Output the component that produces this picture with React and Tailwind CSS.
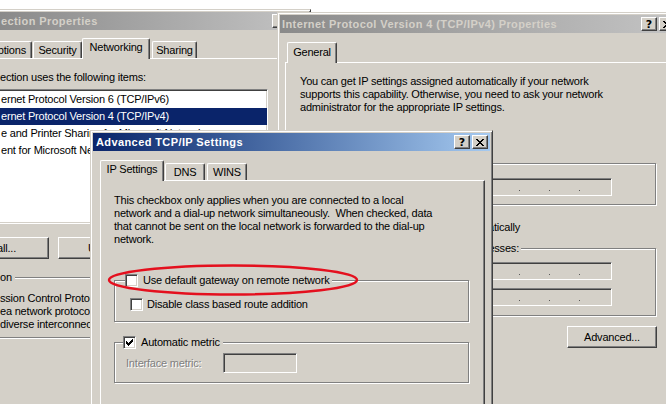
import React from "react";

const raised =
  "border border-t-white border-l-white border-r-[#404040] border-b-[#404040] shadow-[inset_-1px_-1px_0_#808080]";
const sunken =
  "border border-t-[#808080] border-l-[#808080] border-r-white border-b-white shadow-[inset_1px_1px_0_#404040,inset_-1px_-1px_0_#d4d0c8]";
const etched = "border border-[#808080] shadow-[inset_1px_1px_0_#fff,1px_1px_0_#fff]";
const win =
  "border border-t-[#d4d0c8] border-l-[#d4d0c8] border-r-[#404040] border-b-[#404040] shadow-[inset_1px_1px_0_#fff,inset_-1px_-1px_0_#808080] p-[2px] bg-[#d4d0c8]";

function XGlyph() {
  return (
    <svg width="8" height="7" viewBox="0 0 8 7" shapeRendering="crispEdges">
      <path
        fill="#000"
        d="M0 0h2v1h-2z M6 0h2v1h-2z M1 1h2v1h-2z M5 1h2v1h-2z M2 2h4v1h-4z M3 3h2v1h-2z M2 4h4v1h-4z M1 5h2v1h-2z M5 5h2v1h-2z M0 6h2v1h-2z M6 6h2v1h-2z"
      />
    </svg>
  );
}

function TBtn({ kind }) {
  return (
    <div className={`w-[16px] h-[14px] bg-[#d4d0c8] ${raised} flex items-center justify-center`}>
      {kind === "x" ? (
        <XGlyph />
      ) : (
        <span className="font-bold text-[11px] leading-none tracking-normal text-black font-['DejaVu_Sans',sans-serif]">?</span>
      )}
    </div>
  );
}

function TitleBar({ title, active, textClass }) {
  return (
    <div
      className={`h-[18px] shrink-0 flex items-center pr-[2px] ${
        active ? "bg-linear-to-r from-[#0a246a] to-[#a6caf0]" : "bg-linear-to-r from-[#8a8a8a] to-[#c4c4c4]"
      }`}
    >
      <span
        className={`font-bold tracking-[0.4px] whitespace-nowrap ${active ? "text-white" : "text-[#d4d0c8]"} ${textClass}`}
      >
        {title}
      </span>
      <div className="ml-auto flex gap-[2px]">
        <TBtn kind="q" />
        <TBtn kind="x" />
      </div>
    </div>
  );
}

function Tab({ children, selected, className = "" }) {
  return (
    <div
      className={`${
        selected ? "h-[21px] -mb-[1px] relative z-10" : "h-[17px]"
      } bg-[#d4d0c8] border-t border-l border-r border-t-white border-l-white border-r-[#404040] shadow-[inset_-1px_0_0_#808080] rounded-t-[2px] flex items-center whitespace-nowrap ${className}`}
    >
      {children}
    </div>
  );
}

function Check({ checked }) {
  return (
    <div className={`w-[13px] h-[13px] shrink-0 bg-white ${sunken} flex items-center justify-center`}>
      {checked && (
        <svg width="7" height="7" viewBox="0 0 7 7" shapeRendering="crispEdges">
          <path
            fill="#000"
            d="M6 0h1v1h-1z M5 1h2v1h-2z M0 2h1v1h-1z M4 2h3v1h-3z M0 3h2v1h-2z M3 3h3v1h-3z M0 4h5v1h-5z M1 5h3v1h-3z M2 6h1v1h-1z"
          />
        </svg>
      )}
    </div>
  );
}

function IPField({ className = "" }) {
  return (
    <div className={`w-[124px] h-[18px] ml-auto mr-[43px] bg-[#d4d0c8] ${sunken} flex items-start pt-[11px] pl-[30px] ${className}`}>
      <span className="w-[1px] h-[1px] bg-[#5a5a5a]" />
      <span className="w-[1px] h-[1px] bg-[#5a5a5a] ml-[29px]" />
      <span className="w-[1px] h-[1px] bg-[#5a5a5a] ml-[29px]" />
    </div>
  );
}

function ConnectionWindow() {
  return (
    <div className={`absolute left-[-3px] top-[9px] w-[314px] h-[420px] ${win} flex flex-col`}>
      <TitleBar title="ection Properties" textClass="pl-[1px]" />
      <div className="mt-[8px] h-[20px] flex items-end relative z-10">
        <Tab className="ml-[-10px] w-[42px] justify-end pr-[5px]">ptions</Tab>
        <Tab className="ml-[1px] w-[49px] justify-center">Security</Tab>
        <Tab selected className="w-[68px] justify-center pb-[3px]">
          Networking
        </Tab>
        <Tab className="ml-[2px] w-[45px] justify-center">Sharing</Tab>
      </div>
      <div className="flex-1 border-t border-t-white flex flex-col">
        <div className="mt-[12px] leading-[13px] whitespace-nowrap">ection uses the following items:</div>
        <div className={`mt-[5px] ml-[-4px] w-[272px] h-[135px] bg-white ${sunken} pt-[1px] flex flex-col`}>
          <div className="h-[17px] flex items-center pl-[4px] whitespace-nowrap">ernet Protocol Version 6 (TCP/IPv6)</div>
          <div className="h-[17px] flex items-center pl-[4px] whitespace-nowrap bg-[#0a246a] text-white">
            ernet Protocol Version 4 (TCP/IPv4)
          </div>
          <div className="h-[17px] flex items-center pl-[4px] whitespace-nowrap">
            e and Printer Sharing for Microsoft Networks
          </div>
          <div className="h-[17px] flex items-center pl-[4px] whitespace-nowrap">ent for Microsoft Networks</div>
        </div>
        <div className="mt-[13px] flex h-[22px]">
          <div className={`ml-[-4px] w-[53px] ${raised} flex items-center justify-end pr-[32px] overflow-hidden whitespace-nowrap`}>
            Install...
          </div>
          <div className={`ml-[9px] w-[90px] ${raised} flex items-center pl-[29px] whitespace-nowrap`}>Uninstall</div>
        </div>
        <div className={`mt-[18px] ml-[-4px] w-[280px] ${etched} pb-[6px] flex flex-col`}>
          <div className="-mt-[7px] ml-[3px] w-fit pr-[3px] h-[13px] leading-[13px] bg-[#d4d0c8]">on</div>
          <div className="mt-[8px] pl-[3px] leading-[13px] whitespace-nowrap">
            <div>ssion Control Protocol/Internet Protocol. The</div>
            <div>ea network protocol that provides communication</div>
            <div>diverse interconnected networks.</div>
          </div>
        </div>
      </div>
    </div>
  );
}

function IPv4Window() {
  return (
    <div className={`absolute left-[277px] top-[12px] w-[403px] h-[410px] ${win} flex flex-col`}>
      <TitleBar title="Internet Protocol Version 4 (TCP/IPv4) Properties" textClass="pl-[2px]" />
      <div className="mt-[9px] h-[20px] flex items-end relative z-10">
        <Tab selected className="ml-[7px] w-[50px] justify-center pb-[2px]">
          General
        </Tab>
      </div>
      <div className="flex-1 ml-[5px] mr-[5px] border-t border-l border-t-white border-l-white flex flex-col pl-[14px]">
        <div className="mt-[12px] leading-[13px] whitespace-pre">
          {"You can get IP settings assigned automatically if your network\nsupports this capability. Otherwise, you need to ask your network\nadministrator for the appropriate IP settings."}
        </div>
        <div className="mt-[14px] h-[13px] leading-[13px] pl-[16px] whitespace-nowrap">Obtain an IP address automatically</div>
        <div className={`mt-[22px] w-[356px] h-[42px] ${etched} flex flex-col`}>
          <div className="-mt-[7px] h-[13px]" />
          <IPField className="mt-[8px]" />
        </div>
        <div className="mt-[16px] w-[220px] h-[13px] leading-[13px] text-right whitespace-nowrap">
          Obtain DNS server address automatically
        </div>
        <div className={`mt-[14px] w-[356px] ${etched} pb-[9px] flex flex-col`}>
          <div className="-mt-[7px] w-[220px] pr-[2px] h-[13px] leading-[13px] text-right whitespace-nowrap bg-[#d4d0c8]">
            Use the following DNS server addresses:
          </div>
          <IPField className="mt-[7px]" />
          <IPField className="mt-[8px]" />
        </div>
        <div className={`mt-[10px] ml-[267px] w-[90px] h-[22px] ${raised} flex items-center justify-center whitespace-nowrap`}>
          Advanced...
        </div>
      </div>
    </div>
  );
}

function AdvancedWindow() {
  return (
    <div className={`absolute left-[90px] top-[130px] w-[403px] h-[290px] ${win} flex flex-col`}>
      <TitleBar active title="Advanced TCP/IP Settings" textClass="pl-[3px]" />
      <div className="mt-[10px] h-[19px] flex items-end relative z-10">
        <Tab selected className="ml-[7px] w-[64px] justify-center pb-[3px]">
          IP Settings
        </Tab>
        <Tab className="ml-[1px] w-[40px] justify-center">DNS</Tab>
        <Tab className="ml-[2px] w-[40px] justify-center">WINS</Tab>
      </div>
      <div className="flex-1 ml-[7px] w-[385px] border-t border-l border-r border-t-white border-l-white border-r-[#404040] shadow-[inset_-1px_0_0_#808080] flex flex-col pl-[13px]">
        <div className="mt-[13px] leading-[13px] whitespace-pre">
          {"This checkbox only applies when you are connected to a local\nnetwork and a dial-up network simultaneously.  When checked, data\nthat cannot be sent on the local network is forwarded to the dial-up\nnetwork."}
        </div>
        <div className={`mt-[34px] w-[355px] ${etched} pb-[10px] flex flex-col`}>
          <div className="-mt-[7px] ml-[10px] w-fit pr-[3px] h-[13px] flex items-center gap-[5px] bg-[#d4d0c8] whitespace-nowrap">
            <Check />
            <span>Use default gateway on remote network</span>
          </div>
          <div className="mt-[11px] ml-[15px] h-[13px] flex items-center gap-[4px] whitespace-nowrap">
            <Check />
            <span>Disable class based route addition</span>
          </div>
        </div>
        <div className={`mt-[20px] w-[355px] ${etched} pb-[9px] flex flex-col`}>
          <div className="-mt-[7px] ml-[8px] w-fit pr-[3px] h-[13px] flex items-center gap-[5px] bg-[#d4d0c8] whitespace-nowrap">
            <Check checked />
            <span>Automatic metric</span>
          </div>
          <div className="mt-[4px] h-[20px] flex items-center">
            <span className="ml-[11px] w-[97px] text-[#808080] [text-shadow:1px_1px_0_#fff] whitespace-nowrap">
              Interface metric:
            </span>
            <div className={`w-[74px] h-[20px] bg-[#d4d0c8] ${sunken}`} />
          </div>
        </div>
      </div>
    </div>
  );
}

export default function App() {
  return (
    <div className="relative w-[666px] h-[404px] overflow-hidden bg-white font-['Liberation_Sans',Arial,sans-serif] text-[11px] leading-[13px] tracking-[-0.2px] text-black">
      <ConnectionWindow />
      <IPv4Window />
      <AdvancedWindow />
      <svg className="absolute left-[105px] top-[262px]" width="256" height="36" viewBox="0 0 256 36">
        <ellipse cx="128" cy="18" rx="124" ry="14.5" fill="none" stroke="#e4101e" strokeWidth="2.5" />
      </svg>
    </div>
  );
}
